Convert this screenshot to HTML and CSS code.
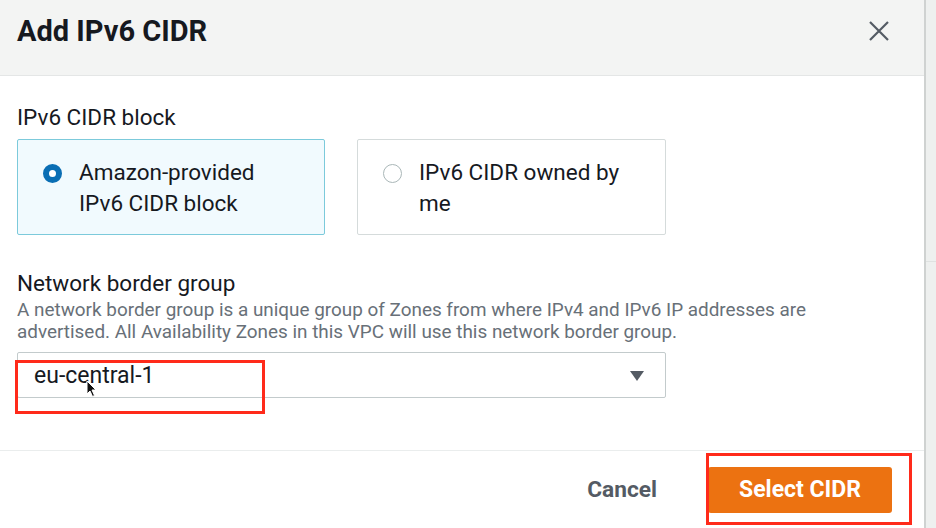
FILE: index.html
```html
<!DOCTYPE html>
<html lang="en">
<head>
<meta charset="utf-8">
<title>Add IPv6 CIDR</title>
<link rel="stylesheet" href="styles.css">
</head>
<body>
<div class="screen">
  <div class="modal">
    <header class="modal-header">
      <h2 class="modal-title">Add IPv6 CIDR</h2>
      <button class="close-btn" aria-label="Close">
        <svg width="22" height="22" viewBox="0 0 22 22"><path d="M2 2 L20 20 M20 2 L2 20" stroke="#545b64" stroke-width="2.2" fill="none"/></svg>
      </button>
    </header>
    <div class="modal-body">
      <div class="field">
        <div class="field-label">IPv6 CIDR block</div>
        <div class="tiles">
          <div class="tile tile-selected">
            <span class="radio radio-checked"></span>
            <span class="tile-text">Amazon-provided IPv6 CIDR block</span>
          </div>
          <div class="tile">
            <span class="radio"></span>
            <span class="tile-text">IPv6 CIDR owned by me</span>
          </div>
        </div>
      </div>
      <div class="field field-nbg">
        <div class="field-label">Network border group</div>
        <div class="field-desc">A network border group is a unique group of Zones from where IPv4 and IPv6 IP addresses are advertised. All Availability Zones in this VPC will use this network border group.</div>
        <div class="select-wrap">
          <div class="select">
            <span class="select-value">eu-central-1</span>
            <svg class="caret" width="16" height="12" viewBox="0 0 16 12"><path d="M1 1 H15 L8 11 Z" fill="#545b64"/></svg>
          </div>
          <div class="annot annot-select"></div>
          <svg class="cursor" width="12" height="18" viewBox="0 0 12 18"><path d="M1 1 L1 14 L4 11 L6.5 16.5 L8.5 15.5 L6 10 L10 10 Z" fill="#111" stroke="#fff" stroke-width="1"/></svg>
        </div>
      </div>
    </div>
    <footer class="modal-footer">
      <button class="btn-link">Cancel</button>
      <div class="primary-wrap">
        <button class="btn-primary">Select CIDR</button>
        <div class="annot annot-btn"></div>
      </div>
    </footer>
  </div>
  <div class="scroll-strip"><div class="strip-top"></div><div class="strip-bottom"></div></div>
</div>
</body>
</html>
```

FILE: styles.css
```css
* { box-sizing: border-box; }
html, body {
  margin: 0;
  padding: 0;
  width: 936px;
  height: 528px;
  overflow: hidden;
  background: #ffffff;
  font-family: Roboto, "Noto Sans", Arial, sans-serif;
  color: #16191f;
}
.screen {
  display: flex;
  width: 936px;
  height: 528px;
}
.modal {
  width: 924px;
  height: 528px;
  display: flex;
  flex-direction: column;
  background: #fff;
}
.modal-header {
  height: 76px;
  flex: none;
  background: #f3f4f3;
  border-bottom: 1px solid #e4e6e6;
  display: flex;
  align-items: center;
  justify-content: space-between;
  padding: 0 34px 14px 17px;
}
.modal-title {
  margin: 0;
  font-size: 29px;
  font-weight: 700;
  color: #16191f;
}
.close-btn {
  border: 0;
  background: transparent;
  padding: 0;
  width: 22px;
  height: 22px;
  display: flex;
}
.modal-body {
  flex: 1;
  padding: 28px 17px 0 17px;
  border-bottom: 1px solid #eaeded;
}
.field-label {
  font-size: 22.5px;
  line-height: 26px;
  color: #16191f;
}
.tiles {
  display: flex;
  gap: 32px;
  margin-top: 9px;
}
.tile {
  width: 309px;
  height: 96px;
  border: 1px solid #d5dbdb;
  border-radius: 2px;
  display: flex;
  align-items: flex-start;
  padding: 17px 20px 0 25px;
  background: #fff;
}
.tile-selected {
  width: 308px;
  background: #f1fafe;
  border-color: #7ccadb;
}
.radio {
  flex: none;
  width: 19px;
  height: 19px;
  border-radius: 50%;
  border: 1.5px solid #aab7b8;
  margin-top: 7px;
  background: #fff;
}
.radio-checked {
  border: 6px solid #0a6eb4;
  background: #fff;
}
.tile-text {
  margin-left: 17px;
  font-size: 22.5px;
  line-height: 31px;
  color: #16191f;
}
.field-nbg {
  margin-top: 35px;
}
.field-desc {
  max-width: 830px;
  font-size: 18.9px;
  line-height: 22px;
  color: #687078;
  margin-top: 3px;
}
.select-wrap {
  position: relative;
  margin-top: 9px;
  width: 649px;
}
.select {
  height: 46px;
  border: 1px solid #c3cbcc;
  border-radius: 2px;
  display: flex;
  align-items: center;
  justify-content: space-between;
  padding: 0 20px 0 16px;
}
.select-value {
  font-size: 23px;
  color: #16191f;
}
.caret {
  margin-top: 2px;
}
.annot {
  position: absolute;
  border: 3px solid #ff2a1a;
  pointer-events: none;
}
.annot-select {
  left: -2px;
  top: 8px;
  width: 250px;
  height: 54px;
}
.cursor {
  position: absolute;
  left: 69px;
  top: 28px;
}
.modal-footer {
  height: 77px;
  flex: none;
  display: flex;
  align-items: center;
  justify-content: flex-end;
  padding: 0 32px 0 0;
}
.btn-link {
  border: 0;
  background: transparent;
  font-family: inherit;
  font-size: 22.7px;
  font-weight: 700;
  color: #545b64;
  padding: 0;
  margin-right: 51px;
}
.primary-wrap {
  position: relative;
}
.btn-primary {
  width: 184px;
  height: 46px;
  border: 0;
  border-radius: 3px;
  background: #ec7211;
  color: #fff;
  font-family: inherit;
  font-size: 23px;
  font-weight: 700;
  display: block;
}
.annot-btn {
  left: -2px;
  top: -14px;
  width: 206px;
  height: 72px;
}
.scroll-strip {
  width: 12px;
  height: 528px;
  border-left: 2px solid #cfd2d1;
  background: #eef0ef;
  display: flex;
  flex-direction: column;
}
.strip-top {
  height: 262px;
  border-bottom: 1px solid #dfe2e1;
}
.strip-bottom {
  flex: 1;
}
```
